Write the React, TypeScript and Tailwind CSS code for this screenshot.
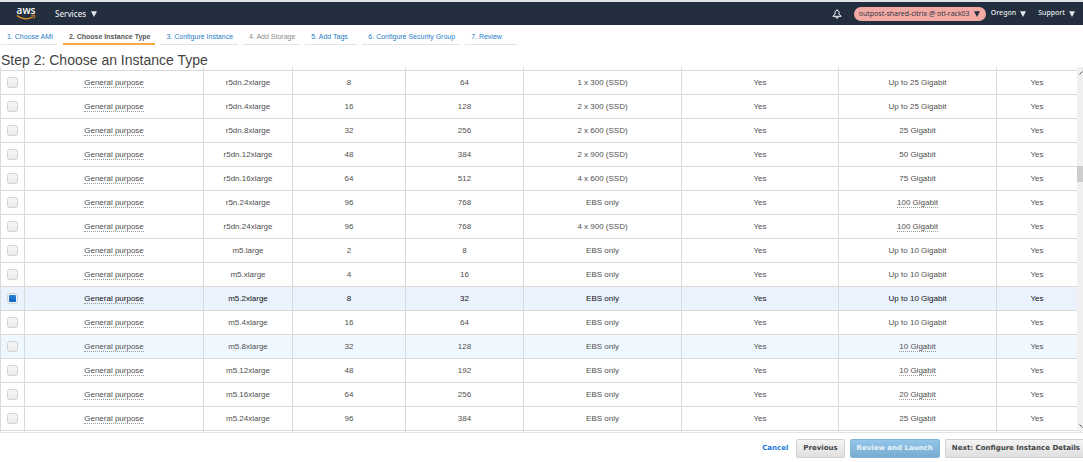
import clsx from "clsx";

interface Instance {
  type: string;
  vcpus: string;
  memory: string;
  storage: string;
  network: string;
  networkHint?: boolean;
}

const instances: Instance[] = [
  { type: "r5dn.2xlarge", vcpus: "8", memory: "64", storage: "1 x 300 (SSD)", network: "Up to 25 Gigabit" },
  { type: "r5dn.4xlarge", vcpus: "16", memory: "128", storage: "2 x 300 (SSD)", network: "Up to 25 Gigabit" },
  { type: "r5dn.8xlarge", vcpus: "32", memory: "256", storage: "2 x 600 (SSD)", network: "25 Gigabit" },
  { type: "r5dn.12xlarge", vcpus: "48", memory: "384", storage: "2 x 900 (SSD)", network: "50 Gigabit" },
  { type: "r5dn.16xlarge", vcpus: "64", memory: "512", storage: "4 x 600 (SSD)", network: "75 Gigabit" },
  { type: "r5n.24xlarge", vcpus: "96", memory: "768", storage: "EBS only", network: "100 Gigabit", networkHint: true },
  { type: "r5dn.24xlarge", vcpus: "96", memory: "768", storage: "4 x 900 (SSD)", network: "100 Gigabit", networkHint: true },
  { type: "m5.large", vcpus: "2", memory: "8", storage: "EBS only", network: "Up to 10 Gigabit" },
  { type: "m5.xlarge", vcpus: "4", memory: "16", storage: "EBS only", network: "Up to 10 Gigabit" },
  { type: "m5.2xlarge", vcpus: "8", memory: "32", storage: "EBS only", network: "Up to 10 Gigabit" },
  { type: "m5.4xlarge", vcpus: "16", memory: "64", storage: "EBS only", network: "Up to 10 Gigabit" },
  { type: "m5.8xlarge", vcpus: "32", memory: "128", storage: "EBS only", network: "10 Gigabit", networkHint: true },
  { type: "m5.12xlarge", vcpus: "48", memory: "192", storage: "EBS only", network: "10 Gigabit", networkHint: true },
  { type: "m5.16xlarge", vcpus: "64", memory: "256", storage: "EBS only", network: "20 Gigabit", networkHint: true },
  { type: "m5.24xlarge", vcpus: "96", memory: "384", storage: "EBS only", network: "25 Gigabit" },
];

const steps = [
  "1. Choose AMI",
  "2. Choose Instance Type",
  "3. Configure Instance",
  "4. Add Storage",
  "5. Add Tags",
  "6. Configure Security Group",
  "7. Review",
];

const selectedType = "m5.2xlarge";
const highlightedType = "m5.8xlarge";

function Caret() {
  return (
    <svg viewBox="0 0 6 6" className="size-1.5 shrink-0 fill-current" aria-hidden="true">
      <path d="M0 0.3H6L3 6Z" />
    </svg>
  );
}

function AwsLogo() {
  return (
    <a href="#" aria-label="aws" className="flex flex-col items-center text-white">
      <span className="font-['Open_Sans',sans-serif] text-[10px] leading-[7px] font-semibold">aws</span>
      <svg viewBox="0 0 20 6" className="h-[6px] w-5" fill="none" stroke="#f59b22" aria-hidden="true">
        <path d="M1 1.5C5.5 5.6 12.5 5.8 17 2.8" strokeWidth="1.3" />
        <path d="M15.5 1.6C17 1 18.4 1 18.7 1.4C19 2 18.4 3.5 17.6 4.5" strokeWidth="1" />
      </svg>
    </a>
  );
}

function TopNav() {
  return (
    <header className="flex h-[25px] shrink-0 items-center border-t-2 border-[#e3e4e6] bg-[#232f3e] pr-2 pl-4 font-['Noto_Sans',sans-serif] text-[7px] font-medium text-gray-200">
      <AwsLogo />
      <button className="ml-[19px] flex items-center gap-[5px] text-[8px]">
        Services <Caret />
      </button>
      <div className="flex-1" />
      <button aria-label="Notifications" className="mr-3">
        <svg viewBox="0 0 10 10" className="size-2.5" fill="none" stroke="#fff" strokeLinejoin="round" aria-hidden="true">
          <path d="M5 0.3V1.5M0.8 7.3L3 5.2V3.5C3 2.3 3.8 1.5 5 1.5S7 2.3 7 3.5V5.2L9.2 7.3Z" />
          <path d="M3.8 8C3.8 9.7 6.2 9.7 6.2 8" />
        </svg>
      </button>
      <button className="flex h-[14px] w-[132px] items-center gap-1 rounded-full bg-[#f3aaa4] pt-px pl-[5px] font-['Open_Sans',sans-serif] whitespace-nowrap text-[#232f3e]">
        outpost-shared-citrix @ otl-rack03 <Caret />
      </button>
      <button className="ml-[5px] flex items-center gap-1">
        Oregon <Caret />
      </button>
      <button className="ml-3 flex items-center gap-1">
        Support <Caret />
      </button>
    </header>
  );
}

function StepTabs() {
  return (
    <nav className="flex shrink-0 gap-[5px] pt-[7px] pl-px text-[7px] leading-[10px] whitespace-nowrap">
      {steps.map((step, i) => (
        <a
          key={step}
          href="#"
          className={clsx(
            "min-w-[52px] pr-[5px] pb-px pl-1.5",
            i === 1 && "border-b-2 border-[#f7a93b] font-bold text-[#555]",
            i === 3 && "border-b border-[#e4e4e4] text-[#8a8a8a]",
            i !== 1 && i !== 3 && "border-b border-[#e4e4e4] text-[#1f7bc8]"
          )}
        >
          {step}
        </a>
      ))}
    </nav>
  );
}

function InstanceRow({ instance }: { instance: Instance }) {
  const selected = instance.type === selectedType;
  return (
    <tr
      className={clsx(
        "h-6 border-y border-[#dadada]",
        selected && "bg-[#eaf2fe] text-[#111]",
        instance.type === highlightedType && "bg-[#f0f8ff]"
      )}
    >
      <td>
        <input
          type="checkbox"
          aria-label={instance.type}
          defaultChecked={selected}
          className="mx-auto block size-[11px] appearance-none rounded-[3px] border border-[#d2d2d2] bg-linear-to-b from-[#f6f6f6] to-[#ebebeb] p-px checked:from-[#2b87dd] checked:to-[#0d5fb8] checked:bg-clip-content"
        />
      </td>
      <td>
        <span className="border-b border-dotted border-[#999]">General purpose</span>
      </td>
      <td>{instance.type}</td>
      <td>{instance.vcpus}</td>
      <td>{instance.memory}</td>
      <td>{instance.storage}</td>
      <td>Yes</td>
      <td>
        <span className={clsx(instance.networkHint && "border-b border-dotted border-[#999]")}>{instance.network}</span>
      </td>
      <td>Yes</td>
    </tr>
  );
}

function InstanceTable() {
  return (
    <div className="flex min-h-0 flex-1 border-b border-[#e2e2e2]">
      <div className="min-w-0 flex-1 overflow-hidden">
        <table className="w-full table-fixed border-collapse text-center text-[8px] leading-[9px] text-[#505050] [&_td]:border-x [&_td]:border-[#dadada]">
          <colgroup>
            <col className="w-6" />
            <col className="w-[179px]" />
            <col className="w-[89px]" />
            <col className="w-[113px]" />
            <col className="w-[118px]" />
            <col className="w-[158px]" />
            <col className="w-[157px]" />
            <col className="w-[158px]" />
            <col className="w-[81px]" />
          </colgroup>
          <tbody>
            {/* edges of the rows scrolled out of view */}
            <tr className="h-[3px]">
              {Array.from({ length: 9 }, (_, i) => <td key={i} />)}
            </tr>
            {instances.map(instance => <InstanceRow key={instance.type} instance={instance} />)}
            <tr className="h-6">
              {Array.from({ length: 9 }, (_, i) => <td key={i} />)}
            </tr>
          </tbody>
        </table>
      </div>
      <div className="flex w-1.5 flex-col items-center overflow-hidden bg-[#f0f0f0] py-1">
        <svg viewBox="0 0 6 4" className="h-1 w-1.5 shrink-0" fill="none" stroke="#555" aria-hidden="true">
          <path d="M2.5 3.5L5.5 0.5" />
        </svg>
        <div className="flex-[91]" />
        <div className="h-4 w-full bg-[#cdcdcd]" />
        <div className="flex-[243]" />
        <svg viewBox="0 0 6 4" className="h-1 w-1.5 shrink-0" fill="none" stroke="#555" aria-hidden="true">
          <path d="M2.5 0.5L5.5 3.5" />
        </svg>
      </div>
    </div>
  );
}

function Footer() {
  return (
    <footer className="flex h-[29px] shrink-0 items-center justify-end gap-[5px] pt-0.5 font-['DejaVu_Sans',sans-serif] text-[7px] font-bold whitespace-nowrap text-[#444]">
      <a href="#" className="mr-[3px] text-[#1b7be0]">Cancel</a>
      <button className="h-[19px] rounded-xs border border-[#d0d0d0] bg-linear-to-b from-[#f4f4f4] to-[#dfdfdf] px-1.5">
        Previous
      </button>
      <button className="h-[19px] rounded-xs border border-[#80b3d6] bg-linear-to-b from-[#94c6ea] to-[#78abd0] px-1.5 text-[#e8f4fc]">
        Review and Launch
      </button>
      <button className="h-[19px] rounded-l-xs border border-r-0 border-[#d0d0d0] bg-linear-to-b from-[#f4f4f4] to-[#dfdfdf] pr-[3px] pl-1.5">
        Next: Configure Instance Details
      </button>
    </footer>
  );
}

export default function App() {
  return (
    <div className="flex h-screen flex-col overflow-hidden bg-white font-['Liberation_Sans',Arial,sans-serif]">
      <TopNav />
      <StepTabs />
      <h1 className="shrink-0 pt-2 pl-px text-[14px] leading-[14px] text-[#444]">Step 2: Choose an Instance Type</h1>
      <InstanceTable />
      <Footer />
    </div>
  );
}
